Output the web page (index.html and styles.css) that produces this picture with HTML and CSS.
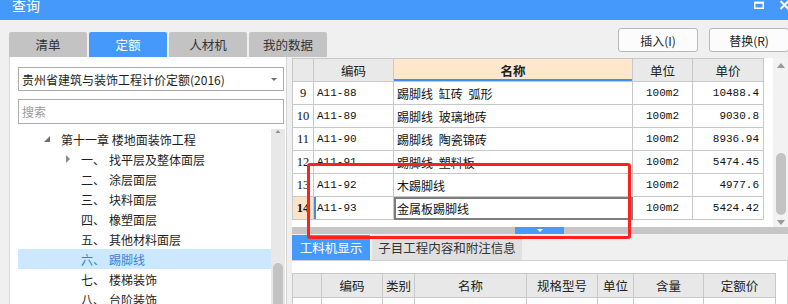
FILE: index.html
```html
<!DOCTYPE html>
<html lang="zh-CN">
<head>
<meta charset="utf-8">
<title>查询</title>
<link rel="stylesheet" href="styles.css">
</head>
<body>
<div class="window">
  <div class="titlebar">
    <span class="title">查询</span>
    <svg class="tb-icons" width="40" height="20" viewBox="0 0 40 20">
      <rect x="6.75" y="2.75" width="8.5" height="5.5" fill="none" stroke="#fff" stroke-width="1.5"/>
      <line x1="6" y1="2.6" x2="16" y2="2.6" stroke="#fff" stroke-width="2"/>
      <path d="M32.5 1 L40.5 9 M40.5 1 L32.5 9" stroke="#fff" stroke-width="2"/>
    </svg>
  </div>
  <div class="content">
    <div class="left">
      <div class="tabs">
        <div class="tab">清单</div>
        <div class="tab active">定额</div>
        <div class="tab">人材机</div>
        <div class="tab">我的数据</div>
      </div>
      <div class="panel">
        <div class="select">
          <span>贵州省建筑与装饰工程计价定额(2016)</span>
          <svg width="6" height="3" viewBox="0 0 6 3"><polygon points="0,0 6,0 3,3" fill="#707070"/></svg>
        </div>
        <div class="search">搜索</div>
        <div class="treewrap">
          <div class="tree">
            <div class="row lv1"><span class="tog"><svg width="6" height="6" viewBox="0 0 6 6"><polygon points="6,0 6,6 0,6" fill="#6f6f6f"/></svg></span><span>第十一章 楼地面装饰工程</span></div>
            <div class="row lv2"><span class="tog"><svg width="4" height="8" viewBox="0 0 4 8"><polygon points="0,0 4,4 0,8" fill="#8a8a8a"/></svg></span><span class="num">一、</span><span>找平层及整体面层</span></div>
            <div class="row lv2"><span class="tog"></span><span class="num">二、</span><span>涂层面层</span></div>
            <div class="row lv2"><span class="tog"></span><span class="num">三、</span><span>块料面层</span></div>
            <div class="row lv2"><span class="tog"></span><span class="num">四、</span><span>橡塑面层</span></div>
            <div class="row lv2"><span class="tog"></span><span class="num">五、</span><span>其他材料面层</span></div>
            <div class="row lv2 sel"><span class="tog"></span><span class="num">六、</span><span>踢脚线</span></div>
            <div class="row lv2"><span class="tog"></span><span class="num">七、</span><span>楼梯装饰</span></div>
            <div class="row lv2"><span class="tog"></span><span class="num">八、</span><span>台阶装饰</span></div>
            <div class="row lv2"><span class="tog"></span><span class="num">九、</span><span>零星装饰项目</span></div>
          </div>
          <div class="vscroll">
            <svg class="arrow-up" width="8" height="5" viewBox="0 0 8 5"><polygon points="4,0 8,5 0,5" fill="#8a8a8a"/></svg>
            <div class="thumb left-thumb"></div>
          </div>
        </div>
      </div>
    </div>
    <div class="right">
      <div class="btns">
        <button class="btn">插入(I)</button>
        <button class="btn">替换(R)</button>
      </div>
      <div class="gridarea">
        <div class="gridwrap">
          <table class="grid">
            <colgroup><col class="c-no"><col class="c-code"><col class="c-name"><col class="c-unit"><col class="c-price"></colgroup>
            <thead>
              <tr><th></th><th>编码</th><th class="hsel">名称</th><th>单位</th><th>单价</th></tr>
            </thead>
            <tbody>
              <tr><td class="no">9</td><td class="code">A11-88</td><td class="name">踢脚线 缸砖 弧形</td><td class="unit">100m2</td><td class="price">10488.4</td></tr>
              <tr><td class="no">10</td><td class="code">A11-89</td><td class="name">踢脚线 玻璃地砖</td><td class="unit">100m2</td><td class="price">9030.8</td></tr>
              <tr><td class="no">11</td><td class="code">A11-90</td><td class="name">踢脚线 陶瓷锦砖</td><td class="unit">100m2</td><td class="price">8936.94</td></tr>
              <tr><td class="no">12</td><td class="code">A11-91</td><td class="name">踢脚线 塑料板</td><td class="unit">100m2</td><td class="price">5474.45</td></tr>
              <tr><td class="no">13</td><td class="code">A11-92</td><td class="name">木踢脚线</td><td class="unit">100m2</td><td class="price">4977.6</td></tr>
              <tr class="cur"><td class="no">14</td><td class="code">A11-93</td><td class="name editing">金属板踢脚线</td><td class="unit">100m2</td><td class="price">5424.42</td></tr>
            </tbody>
          </table>
        </div>
        <div class="vscroll2">
          <svg class="arrow-up2" width="8" height="5" viewBox="0 0 8 5"><polygon points="4,0 8,5 0,5" fill="#9a9a9a"/></svg>
          <div class="thumb main-thumb"></div>
          <svg class="arrow-down2" width="8" height="5" viewBox="0 0 8 5"><polygon points="0,0 8,0 4,5" fill="#9a9a9a"/></svg>
        </div>
      </div>
      <div class="hbar">
        <div class="handle"><svg width="6" height="3" viewBox="0 0 6 3"><polygon points="0,0 6,0 3,3" fill="#fff"/></svg></div>
      </div>
      <div class="btabs">
        <div class="btab active">工料机显示</div>
        <div class="btab wide">子目工程内容和附注信息</div>
      </div>
      <div class="bpanel">
        <table class="bgrid">
          <colgroup><col class="b1"><col class="b2"><col class="b3"><col class="b4"><col class="b5"><col class="b6"><col class="b7"><col class="b8"></colgroup>
          <thead>
            <tr><th></th><th>编码</th><th>类别</th><th>名称</th><th>规格型号</th><th>单位</th><th>含量</th><th>定额价</th></tr>
          </thead>
          <tbody>
            <tr><td></td><td></td><td class="ctr">人</td><td class="lft">二类综合用工</td><td></td><td class="ctr">工日</td><td></td><td></td></tr>
          </tbody>
        </table>
      </div>
    </div>
  </div>
  <div class="annot"></div>
</div>
</body>
</html>
```

FILE: styles.css
```css
* { box-sizing: border-box; }

html, body {
  margin: 0;
  padding: 0;
}

body {
  width: 788px;
  height: 304px;
  overflow: hidden;
  background: #f0f0f0;
  font-family: "Noto Sans CJK SC", "Noto Sans", sans-serif;
  font-size: 12px;
  color: #222;
}

.window {
  position: relative;
  width: 788px;
  height: 304px;
  overflow: hidden;
  display: flex;
  flex-direction: column;
}

/* title bar */
.titlebar {
  height: 20px;
  flex: none;
  background: #4599fa;
  display: flex;
  align-items: flex-start;
  color: #fff;
}
.title {
  font-size: 14px;
  line-height: 14px;
  margin-left: 12px;
  margin-top: -2px;
}
.tb-icons {
  margin-left: auto;
  display: block;
}

.content {
  flex: 1;
  display: flex;
  min-height: 0;
}

/* left side */
.left {
  width: 290px;
  flex: none;
  padding-left: 9px;
  display: flex;
  flex-direction: column;
}
.tabs {
  display: flex;
  gap: 2px;
  margin-top: 12px;
  height: 25px;
  flex: none;
  white-space: nowrap;
}
.tab {
  width: 78px;
  flex: none;
  height: 25px;
  line-height: 25px;
  text-align: center;
  background: #c3c3c3;
  border-radius: 2px 2px 0 0;
  color: #333;
  font-size: 12.5px;
}
.tab.active {
  background: #4599fa;
  color: #fff;
}

.panel {
  width: 278px;
  flex: 1;
  background: #fff;
  border-left: 1px solid #d6d6d6;
  border-right: 1px solid #d6d6d6;
  padding: 10px 1px 0 8px;
  display: flex;
  flex-direction: column;
  min-height: 0;
}
.select {
  width: 266px;
  height: 24px;
  flex: none;
  border: 1px solid #ababab;
  display: flex;
  align-items: center;
  justify-content: space-between;
  padding: 0 6px 0 3px;
  color: #1e1e1e;
}
.select svg { display: block; }
.search {
  width: 266px;
  height: 25px;
  flex: none;
  margin-top: 8px;
  border: 1px solid #ababab;
  padding-left: 3px;
  display: flex;
  align-items: center;
  color: #9a9a9a;
}
.treewrap {
  margin-top: 5px;
  display: flex;
  flex: 1;
  min-height: 0;
}
.tree {
  width: 253px;
  flex: none;
}
.row {
  height: 20px;
  display: flex;
  align-items: center;
  color: #1e1e1e;
  white-space: nowrap;
}
.row .tog {
  display: flex;
  align-items: center;
  flex: none;
}
.row .tog svg { display: block; }
.lv1 { padding-left: 26px; }
.lv1 .tog { width: 17px; }
.lv2 { padding-left: 48px; }
.lv2 .tog { width: 15px; }
.lv2 .num { width: 28px; flex: none; }
.row.sel {
  background: #cce8ff;
  color: #3b7fd6;
}

.vscroll {
  width: 14px;
  flex: none;
  background: #e8e8e8;
  display: flex;
  flex-direction: column;
  align-items: center;
}
.arrow-up { display: block; margin-top: 1px; }
.thumb {
  width: 10px;
  background: #c3c3c3;
  border-radius: 5px;
}
.left-thumb {
  margin-top: 130px;
  height: 60px;
  border-radius: 5px 5px 0 0;
}

/* right side */
.right {
  flex: 1;
  min-width: 0;
  padding-left: 2px;
  display: flex;
  flex-direction: column;
}
.btns {
  display: flex;
  justify-content: flex-end;
  gap: 11px;
  margin-top: 8px;
  margin-right: -1px;
  height: 24px;
  flex: none;
}
.btn {
  width: 80px;
  height: 24px;
  border: 1px solid #b9b9b9;
  border-radius: 3px;
  background: #fcfcfc;
  font-family: inherit;
  font-size: 12px;
  color: #222;
  padding: 0;
}

.gridarea {
  margin-top: 6px;
  height: 169px;
  flex: none;
  display: flex;
}
.gridwrap {
  width: 481px;
  flex: none;
  background: #fff;
}
.grid {
  border-collapse: collapse;
  table-layout: fixed;
  width: 471px;
}
.c-no { width: 21px; }
.c-code { width: 80px; }
.c-name { width: 239px; }
.c-unit { width: 60px; }
.c-price { width: 71px; }

.grid th, .grid td {
  border: 1px solid #c8c8c8;
  height: 23px;
  padding: 0;
  white-space: nowrap;
  overflow: hidden;
}
.grid th {
  background: #e9e9e9;
  font-weight: normal;
  font-size: 12.5px;
  color: #222;
  text-align: center;
}
.grid th.hsel {
  background: #fee7cc;
  font-weight: bold;
  box-shadow: inset 0 -2px 0 #3f8ff0;
}
.grid td {
  color: #111;
}
.grid td.no {
  text-align: center;
  font-family: "Liberation Serif", serif;
  font-size: 12.5px;
}
.grid td.code {
  padding-left: 3px;
  font-family: "Liberation Mono", monospace;
  font-size: 11px;
}
.grid td.name {
  padding-left: 3px;
  font-size: 12px;
  word-spacing: 3px;
}
.grid td.unit {
  text-align: center;
  font-family: "Liberation Mono", monospace;
  font-size: 11px;
}
.grid td.price {
  text-align: right;
  padding-right: 4px;
  font-family: "Liberation Mono", monospace;
  font-size: 11px;
}
.grid tr.cur td.no {
  background: #fee4c6;
  font-weight: bold;
}
.grid tr.cur td.code {
  box-shadow: inset 2px 0 0 #3d8ef0;
}
.grid td.editing {
  outline: 2px solid #7d7d7d;
  outline-offset: -2px;
}

.vscroll2 {
  width: 15px;
  flex: none;
  background: #f2f2f2;
  display: flex;
  flex-direction: column;
  align-items: center;
}
.arrow-up2 { display: block; margin-top: 5px; }
.main-thumb {
  margin-top: 85px;
  height: 62px;
}
.arrow-down2 { display: block; margin-top: 5px; }

.hbar {
  height: 7px;
  flex: none;
  background: #c6c6c6;
  display: flex;
}
.handle {
  margin-left: 223px;
  width: 49px;
  height: 7px;
  background: #4a9af5;
  display: flex;
  justify-content: center;
  padding-top: 2px;
}
.handle svg { display: block; }

.btabs {
  display: flex;
  gap: 2px;
  margin-top: 1px;
  height: 25px;
  flex: none;
}
.btab {
  width: 78px;
  height: 25px;
  line-height: 25px;
  text-align: center;
  background: #e0e0e0;
  color: #333;
  font-size: 12.5px;
}
.btab.wide { width: 150px; }
.btab.active {
  background: #4599fa;
  color: #fff;
}

.bpanel {
  flex: 1;
  background: #fff;
  border-top: 1px solid #d0d0d0;
  border-right: 1px solid #d0d0d0;
  padding-top: 12px;
}
.bgrid {
  border-collapse: collapse;
  table-layout: fixed;
  width: 483px;
}
.b1 { width: 29px; }
.b2 { width: 61px; }
.b3 { width: 32px; }
.b4 { width: 112px; }
.b5 { width: 71px; }
.b6 { width: 36px; }
.b7 { width: 70px; }
.b8 { width: 72px; }
.bgrid th, .bgrid td {
  border: 1px solid #c8c8c8;
  height: 24px;
  padding: 0;
  white-space: nowrap;
  overflow: hidden;
}
.bgrid th {
  background: #e8e8e8;
  font-weight: normal;
  font-size: 12.5px;
  color: #222;
  text-align: center;
}
.bgrid td { height: 23px; color: #111; }
.bgrid td.ctr { text-align: center; }
.bgrid td.lft { padding-left: 3px; }

/* annotation overlay */
.annot {
  position: absolute;
  left: 307px;
  top: 163px;
  width: 324px;
  height: 76px;
  border: 3px solid #ff2020;
  border-radius: 3px;
  pointer-events: none;
}
```
